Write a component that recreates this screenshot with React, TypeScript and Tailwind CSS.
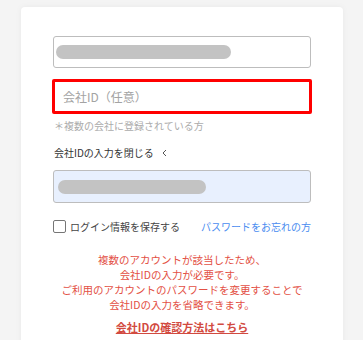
import { useState } from 'react';

const jp = { fontFamily: '"Noto Sans CJK JP", "Noto Sans", sans-serif' };

export default function App() {
  const [remember, setRemember] = useState(false);

  return (
    <div className="w-[363px] h-[340px] overflow-hidden bg-[#f4f4f4]" style={jp}>
      <div className="mt-[7px] ml-[21px] w-[322px] h-[400px] bg-white rounded-[4px] shadow-[0_0_6px_rgba(0,0,0,0.05)] px-[32px] pt-[29px]">
        {/* ユーザーID */}
        <div className="h-[32px] border border-[#bdbdbd] rounded-[3px] flex items-center pl-[2px]">
          <div className="w-[175px] h-[14px] rounded-full bg-[#c3c3c3]" />
        </div>

        {/* 会社ID（任意） */}
        <div className="mt-[11px] -mx-[1px] h-[35px] border-[3px] border-[#ff0000] rounded-[2px] flex items-center px-[8px]">
          <span className="text-[12px] text-[#a3a3a3]">会社ID（任意）</span>
        </div>
        <p className="mt-[5px] text-[10px] leading-[14px] text-[#ababab] pl-[1px]">＊複数の会社に登録されている方</p>

        <div className="mt-[13px] flex items-center gap-[8px] pl-[1px] text-[10px] leading-[14px] text-[#333]">
          <span>会社IDの入力を閉じる</span>
          <svg width="5" height="8" viewBox="0 0 5 8" fill="none" stroke="#555" strokeWidth="1">
            <path d="M4 1 L1 4 L4 7" />
          </svg>
        </div>

        {/* パスワード */}
        <div className="mt-[10px] h-[33px] border border-[#bdbdbd] rounded-[3px] bg-[#e8f0fe] flex items-center pl-[4px]">
          <div className="w-[148px] h-[14px] rounded-full bg-[#c3c3c3]" />
        </div>

        <div className="mt-[16px] flex items-center justify-between">
          <label className="flex items-center gap-[4px] text-[10px] text-[#444]">
            <span
              onClick={() => setRemember(!remember)}
              className="w-[13px] h-[13px] border border-[#767676] rounded-[2px] bg-white"
            />
            <span>ログイン情報を保存する</span>
          </label>
          <a className="text-[10px] text-[#4a8cf0]">パスワードをお忘れの方</a>
        </div>

        <div className="mt-[18px] text-center text-[10.5px] leading-[15px] text-[#e35044]">
          <p>複数のアカウントが該当したため、</p>
          <p>会社IDの入力が必要です。</p>
          <p>ご利用のアカウントのパスワードを変更することで</p>
          <p>会社IDの入力を省略できます。</p>
        </div>

        <div className="mt-[5px] text-center leading-[16px]">
          <a className="text-[11px] font-bold text-[#d24a40] underline underline-offset-1">会社IDの確認方法はこちら</a>
        </div>
      </div>
    </div>
  );
}
